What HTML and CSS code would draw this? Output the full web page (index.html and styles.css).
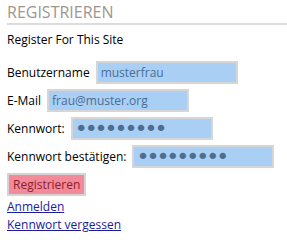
FILE: index.html
```html
<!DOCTYPE html>
<html>
  <head>
    <title>Registrieren</title>
    <link rel="stylesheet" href="styles.css">
  </head>
  <body>
    <div class="block">
      <h2 class="title">Registrieren</h2>
      <p class="intro">Register For This Site</p>

      <form class="register">
        <div class="row">
          <label for="user">Benutzername</label>
          <input type="text" id="user" class="field" value="musterfrau">
        </div>
        <div class="row">
          <label for="mail">E-Mail</label>
          <input type="text" id="mail" class="field" value="frau@muster.org">
        </div>
        <div class="row">
          <label for="pass">Kennwort:</label>
          <input type="password" id="pass" class="field" value="geheim123">
        </div>
        <div class="row">
          <label for="pass2">Kennwort bestätigen:</label>
          <input type="password" id="pass2" class="field" value="geheim123">
        </div>
        <button type="button" class="btn">Registrieren</button>
      </form>

      <ul class="links">
        <li><a href="#">Anmelden</a></li>
        <li><a href="#">Kennwort vergessen</a></li>
      </ul>
    </div>
  </body>
</html>
```

FILE: styles.css
```css
body {
  font-family: "Open Sans", "DejaVu Sans", sans-serif;
  font-size: 12px;
  margin: 0;
  padding: 0 0 0 7px;
  color: #000;
  background: #fff;
}
.title {
  font-size: 16px;
  font-weight: normal;
  text-transform: uppercase;
  color: #9d9690;
  margin: 0;
  padding: 3px 0 2px;
  border-bottom: 2px solid #dcdcdc;
  line-height: 18px;
}
.intro {
  margin: 7px 0 13px;
  line-height: 16px;
}
.register {
  margin: 0;
}
.row {
  display: flex;
  align-items: center;
  gap: 6px;
  margin-bottom: 5px;
}
.field {
  width: 142px;
  height: 23px;
  box-sizing: border-box;
  border: 2px solid #d6d6d6;
  background-color: #a9cff5;
  color: #4a6e92;
  font-family: inherit;
  font-size: 12px;
  padding: 0 3px;
  margin: 0;
}
input[type="password"] {
  font-family: "DejaVu Sans", sans-serif;
  font-size: 22px;
  color: #4d6e8e;
  letter-spacing: -3px;
  padding: 0 2px;
}
.btn {
  margin-top: 0;
  height: 23px;
  padding: 0 4px;
  border: 2px solid #d4d4d4;
  background-color: #f28a9a;
  color: #8a1e2e;
  font-family: inherit;
  font-size: 12px;
}
.links {
  list-style: none;
  margin: 2px 0 0;
  padding: 0;
  line-height: 18px;
}
.links a {
  color: #1a1a9a;
}
```
